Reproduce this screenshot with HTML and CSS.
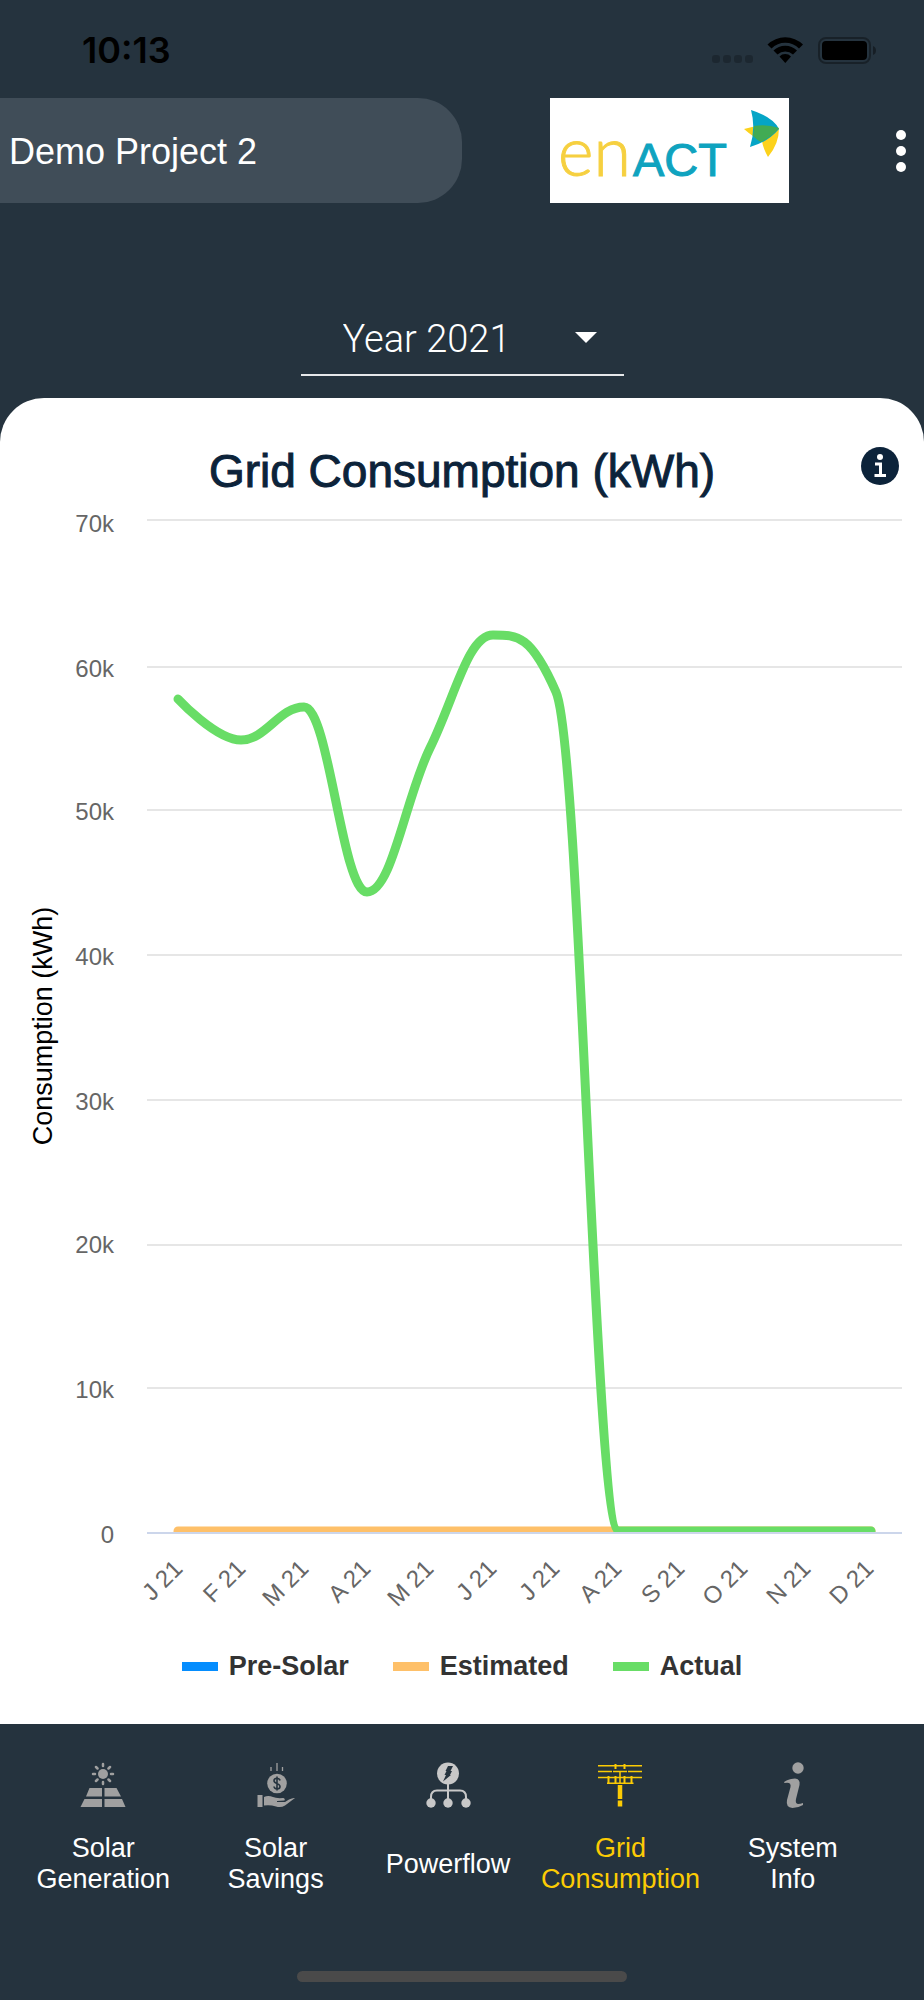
FILE: index.html
```html
<!DOCTYPE html>
<html lang="en">
<head>
    <meta charset="UTF-8">
    <meta name="viewport" content="width=device-width, initial-scale=1.0">
    <title>Grid Consumption</title>
    <link rel="stylesheet" href="styles.css">
</head>
<body>

<div class="status-bar">
    <span class="time">10:13</span>
    <svg class="status-icons" width="166" height="28" viewBox="0 0 166 28" aria-hidden="true">
        <g opacity="0.22">
            <rect x="2" y="19" width="8" height="8" rx="3"/>
            <rect x="13" y="19" width="8" height="8" rx="3"/>
            <rect x="24" y="19" width="8" height="8" rx="3"/>
            <rect x="35" y="19" width="8" height="8" rx="3"/>
        </g>
        <path d="M57.500 8.500 A25.500 25.500 0 0 1 93 8.500 L89 12.500 A19.500 19.500 0 0 0 61.500 12.500 Z"/>
        <path d="M63.500 14.500 A17 17 0 0 1 87 14.500 L83 18.500 A11.500 11.500 0 0 0 67.500 18.500 Z"/>
        <path d="M69.500 20.500 A8 8 0 0 1 81 20.500 L75.300 27 Z"/>
        <rect x="109" y="2" width="51" height="25" rx="7" fill="none" stroke="#000" stroke-width="2" opacity="0.35"/>
        <rect x="112" y="5" width="45" height="19" rx="4"/>
        <path d="M163 10 Q166 11 166 14.500 Q166 18 163 19 Z" opacity="0.4"/>
    </svg>
</div>

<header class="top-bar">
    <div class="project">Demo Project 2</div>
    <div class="logo">
        <svg width="239" height="105" viewBox="0 0 239 105" role="img" aria-label="enACT">
            <rect width="239" height="105" fill="#fff"/>
            <text class="logo-en" x="8" y="78">en</text>
            <text class="logo-act" x="83" y="78">ACT</text>
            <path fill="#fcd21c" d="M194 31 Q213 25 229 30 Q229 46 218 59 Q213 50 212 43 Q203 39 194 31 Z"/>
            <path fill="#05a5c6" d="M201 12 Q223 19 229 31 Q218 44 200 49 Q206 30 201 12 Z"/>
            <path fill="#42ab54" d="M204 28 Q217 26 229 30 Q222 39 211 44 Q207 42 203 38 Q204 33 204 28 Z"/>
        </svg>
    </div>
    <button class="menu-button" type="button" aria-label="Menu">
        <svg width="12" height="44" viewBox="0 0 12 44" fill="#fff">
            <circle cx="6" cy="6" r="5"/>
            <circle cx="6" cy="22" r="5"/>
            <circle cx="6" cy="38" r="5"/>
        </svg>
    </button>
</header>

<div class="year-picker">
    <select class="year-select" aria-label="Year">
        <option>Year 2021</option>
    </select>
    <svg class="year-arrow" width="22" height="11" viewBox="0 0 22 11" aria-hidden="true"><path fill="#fff" d="M0 0 H22 L11 11 Z"/></svg>
</div>

<main class="card">
    <div class="card-header">
        <h1>Grid Consumption (kWh)</h1>
        <button class="info-button" type="button" aria-label="Info">
            <svg width="38" height="38" viewBox="0 0 38 38">
                <circle cx="19" cy="19" r="19" fill="#0c233a"/>
                <circle cx="19" cy="10" r="3" fill="#fff"/>
                <path fill="none" stroke="#fff" stroke-width="3" d="M14 17 H19.500 V28 M13.500 28.500 H25"/>
            </svg>
        </button>
    </div>

    <svg class="chart" viewBox="0 0 924 1120" role="img" aria-label="Grid consumption per month">
        <clipPath id="plot"><rect x="147" y="0" width="755" height="1032"/></clipPath>

        <path class="grid-line" d="M147 20 H902 M147 167 H902 M147 310 H902 M147 455 H902 M147 600 H902 M147 745 H902 M147 888 H902"/>

        <!-- series -->
        <g clip-path="url(#plot)">
            <path class="series estimated" d="M178 1031 H871"/>
            <path class="series actual" d="M178 199 C178 199 216 240 241 240 C266 240 279 207 304 207 C329 207 342 392 367 392 C392 392 405 299 430 248 C455 197 468 135 493 135 C518 135 531 135 556 192 C581 249 594 1031 619 1031 L871 1031"/>
        </g>
        <path class="axis-line" d="M147 1033 H902"/>

        <g class="y-labels">
            <text x="114" y="32">70k</text>
            <text x="114" y="177">60k</text>
            <text x="114" y="320">50k</text>
            <text x="114" y="465">40k</text>
            <text x="114" y="610">30k</text>
            <text x="114" y="753">20k</text>
            <text x="114" y="898">10k</text>
            <text x="114" y="1043">0</text>
        </g>
        <text class="axis-title" transform="translate(52 526) rotate(-90)">Consumption (kWh)</text>

        <g class="x-labels">
            <text transform="translate(184 1070) rotate(-45)">J 21</text>
            <text transform="translate(247 1070) rotate(-45)">F 21</text>
            <text transform="translate(310 1070) rotate(-45)">M 21</text>
            <text transform="translate(372 1070) rotate(-45)">A 21</text>
            <text transform="translate(435 1070) rotate(-45)">M 21</text>
            <text transform="translate(498 1070) rotate(-45)">J 21</text>
            <text transform="translate(561 1070) rotate(-45)">J 21</text>
            <text transform="translate(623 1070) rotate(-45)">A 21</text>
            <text transform="translate(686 1070) rotate(-45)">S 21</text>
            <text transform="translate(749 1070) rotate(-45)">O 21</text>
            <text transform="translate(812 1070) rotate(-45)">N 21</text>
            <text transform="translate(875 1070) rotate(-45)">D 21</text>
        </g>
    </svg>

    <ul class="legend">
        <li><span class="swatch swatch-presolar"></span>Pre-Solar</li>
        <li><span class="swatch swatch-estimated"></span>Estimated</li>
        <li><span class="swatch swatch-actual"></span>Actual</li>
    </ul>
</main>

<nav class="tab-bar">
    <a class="tab" href="#generation">
        <svg class="tab-icon" viewBox="0 0 46 46" fill="#a0a0a0">
            <circle cx="23" cy="12" r="5"/>
            <path stroke="#a0a0a0" stroke-width="2.500" stroke-linecap="round" d="M23 4 V2 M23 20 V22 M15 12 H13 M31 12 H33 M17.500 6.500 L16 5 M28.500 6.500 L30 5 M17.500 17.500 L16 19 M28.500 17.500 L30 19"/>
            <path d="M9.500 26 H22 V34.500 H6 Z M24.500 26 H36.500 L41 34.500 H24.500 Z M4.500 37 H22 V45 H0.500 Z M24.500 37 H42 L45.500 45 H24.500 Z"/>
        </svg>
        <span class="tab-label">Solar<br>Generation</span>
    </a>
    <a class="tab" href="#savings">
        <svg class="tab-icon" viewBox="0 0 46 46" fill="#a0a0a0">
            <path stroke="#a0a0a0" stroke-width="1.300" d="M18 5 V9 M24 1 V9 M29.500 5 V9"/>
            <circle cx="24" cy="21.500" r="9.800"/>
            <path fill="none" stroke="#25333e" stroke-width="1.600" d="M27 18.500 C26.500 15.500 21 15.500 21 18.800 C21 22 27 21 27 24.500 C27 27.700 21.300 27.700 21 24.500 M24 14.500 V28.500"/>
            <path d="M4.500 33 H9.500 V45 H4.500 Z M11 35 Q15 33 20 35 Q23 36.500 30 36 Q32.500 36.500 31.500 38.500 L24 39 V40 L32 40 L36 37.500 Q40 35.500 42 36 L32 43.500 Q28 46 23 44.500 Q17 42.500 11 43.500 Z"/>
        </svg>
        <span class="tab-label">Solar<br>Savings</span>
    </a>
    <a class="tab" href="#powerflow">
        <svg class="tab-icon" viewBox="0 0 46 46" fill="#c8c8c8">
            <path fill="none" stroke="#c8c8c8" stroke-width="2" d="M23 20 V40 M6 40 V35 Q6 28.500 12 28.500 H35 Q41 28.500 41 35 V40"/>
            <circle cx="23" cy="11.500" r="11"/>
            <circle cx="6" cy="41" r="4.700"/>
            <circle cx="23" cy="41" r="4.700"/>
            <circle cx="41" cy="41" r="4.700"/>
            <path fill="#25333e" d="M23 4 H28 L25.500 9 H27 L25 13 H26 L18 19.500 L21 13 H19.500 L21.500 9 H20.500 Z"/>
        </svg>
        <span class="tab-label">Powerflow</span>
    </a>
    <a class="tab active" href="#consumption">
        <svg class="tab-icon" viewBox="0 0 46 46" fill="none" stroke="#fccb04">
            <path stroke-width="1.500" d="M1 3.700 H45 M1 9.500 H15 M16 9.500 H30 M31 9.500 H45 M1 15.500 H45 M10 21.300 H36.500 M23 10 V21"/>
            <path stroke-width="2" d="M18.500 2 V7 M27.500 2 V7 M11.500 14 V21 M18.500 14 V21 M27.500 14 V21 M34.500 14 V21"/>
            <path stroke-width="4.500" d="M23 23 V37 M23 38.500 V44.500"/>
        </svg>
        <span class="tab-label">Grid<br>Consumption</span>
    </a>
    <a class="tab" href="#system">
        <svg class="tab-icon" viewBox="0 0 46 46" fill="#a0a0a0">
            <circle cx="28" cy="6" r="5.700"/>
            <path d="M14 20 Q19 16.500 25 16.500 Q30.500 17 29.500 23 L26 37 Q25 41.500 28 42 Q30.500 42 33 41 V43 Q28 46 22.500 46 Q15.500 45.500 17 38 L20.500 25 Q21.500 19.500 14.500 21 Z"/>
        </svg>
        <span class="tab-label">System<br>Info</span>
    </a>
</nav>
<div class="home-indicator"></div>

</body>
</html>
```

FILE: styles.css
```css
* { box-sizing: border-box; }
body { font-family: "Liberation Sans", Arial, sans-serif; background-color: #25333e; color: #fff; margin: 0; min-height: 100vh; }
button { border: none; background: none; padding: 0; cursor: pointer; display: flex; }

.status-bar { display: flex; justify-content: space-between; align-items: center; height: 98px; padding: 2px 48px 0 82px; color: #000; }
.time { font-family: Inter, sans-serif; font-size: 36px; font-weight: 600; }

.top-bar { display: grid; grid-template-columns: 1fr 1fr; align-items: center; position: relative; }
.project { height: 105px; line-height: 105px; padding: 1px 0 0 9px; font-size: 36px; background-color: #404d58; border-radius: 0 44px 44px 0; }
.logo { display: flex; padding-left: 88px; }
.logo-en { font-family: Lato, sans-serif; font-weight: 300; font-size: 68px; fill: #f6d040; stroke: #f6d040; stroke-width: 1px; }
.logo-act { font-size: 47px; fill: #0fa3bf; stroke: #0fa3bf; stroke-width: 1px; }
.menu-button { position: absolute; right: 17px; }

.year-picker { position: relative; width: 323px; margin: 101px auto 22px; }
.year-select { display: block; width: 100%; height: 72px; padding: 0 80px 0 42px; appearance: none; border: none; border-bottom: 2px solid #e6e8ea; border-radius: 0; background: transparent; color: #fff; font-family: Roboto, sans-serif; font-size: 38px; font-weight: 300; }
.year-arrow { position: absolute; right: 27px; top: 28px; pointer-events: none; }

.card { background-color: #fff; color: #0c233a; border-radius: 44px 44px 0 0; padding: 46px 0 42px; }
.card-header { display: grid; grid-template-columns: 1fr auto 1fr; height: 56px; padding: 0 25px; }
.card-header h1 { grid-column: 2; margin: 0; font-size: 46px; line-height: 54px; font-weight: normal; -webkit-text-stroke: 1px #0c233a; }
.info-button { justify-self: end; align-self: start; padding-top: 3px; }

.chart { display: block; width: 100%; }
.grid-line { stroke: #e6e6e6; stroke-width: 2; }
.axis-line { stroke: #ccd6eb; stroke-width: 2; }
.series { fill: none; stroke-width: 9; stroke-linecap: round; stroke-linejoin: round; }
.estimated { stroke: #fec069; }
.actual { stroke: #68dd66; }
.y-labels, .x-labels { font-size: 24px; fill: #666; text-anchor: end; }
.axis-title { font-size: 27px; fill: #000; text-anchor: middle; }

.legend { display: flex; justify-content: center; gap: 44px; list-style: none; margin: 30px 0 0; padding: 0; font-size: 27px; line-height: 32px; font-weight: bold; color: #333; }
.legend li { display: flex; align-items: center; gap: 11px; }
.swatch { width: 36px; height: 9px; }
.swatch-presolar { background-color: #058dfe; }
.swatch-estimated { background-color: #fec069; }
.swatch-actual { background-color: #68dd66; }

.tab-bar { display: flex; padding: 38px 45px 0 17px; }
.tab { flex: 1 1 0; display: flex; flex-direction: column; align-items: center; gap: 25px; color: #fff; text-decoration: none; text-align: center; }
.tab.active { color: #fccb04; }
.tab-icon { width: 46px; height: 46px; }
.tab-label { display: flex; align-items: center; min-height: 62px; font-size: 27px; line-height: 31px; }
.home-indicator { width: 330px; height: 11px; margin: 76px auto 18px; border-radius: 6px; background-color: #4a4a4a; }
```
